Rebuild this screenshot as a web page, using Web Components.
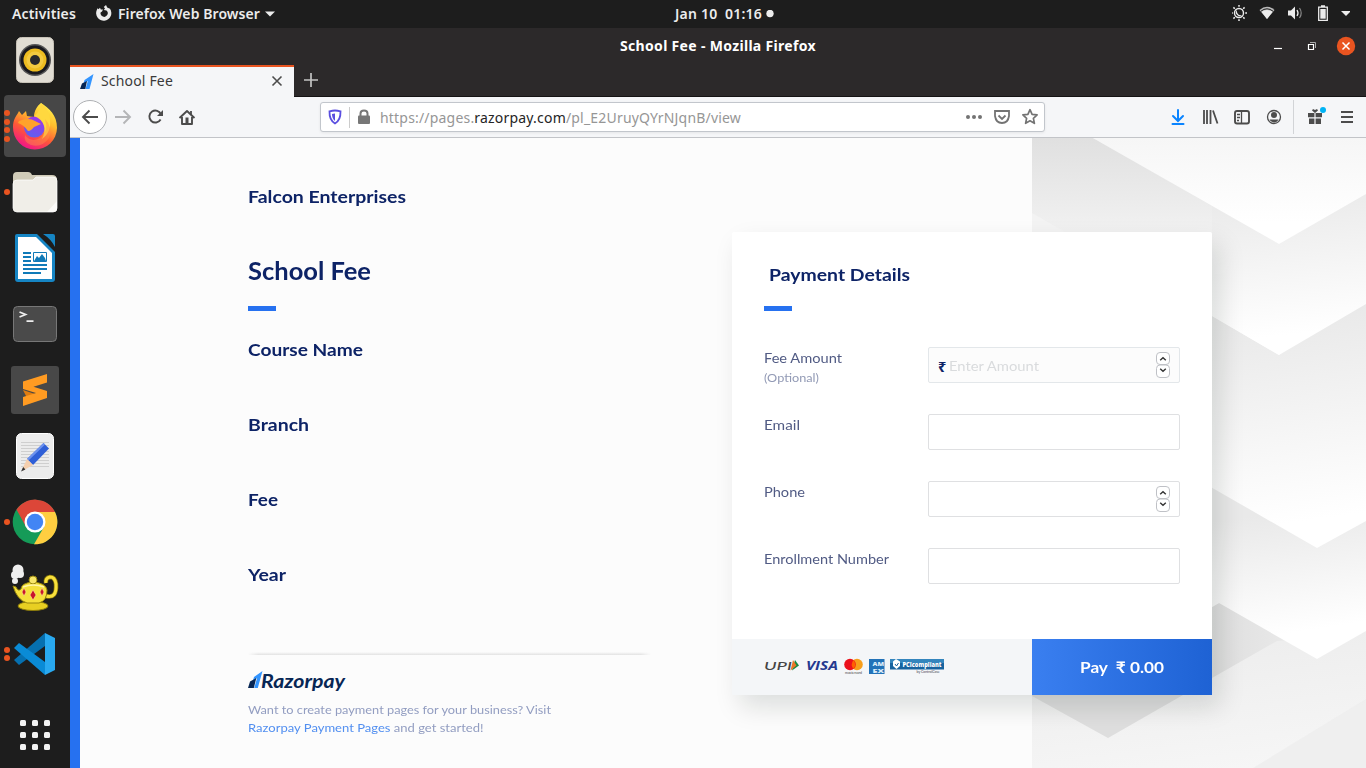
<!DOCTYPE html>
<html lang="en">
<head>
<meta charset="utf-8">
<title>School Fee</title>
<style>
html,body{margin:0;height:100%;overflow:hidden;background:#1d1d1d}
body{font-family:"Noto Sans","Open Sans",sans-serif}
</style>
</head>
<body>
<desk-top></desk-top>
<script>
const define = (name, html) => {
  const t = document.createElement('template');
  t.innerHTML = html;
  customElements.define(name, class extends HTMLElement {
    constructor() {
      super();
      this.attachShadow({mode: 'open'}).append(t.content.cloneNode(true));
    }
  });
};

define('top-panel', `
<style>
:host{display:grid;grid-template-columns:1fr auto 1fr;align-items:center;height:28px;background:#1d1d1d;color:#ececec;font-size:14px;font-weight:600;line-height:28px;white-space:pre}
.l{display:flex;padding-left:12px;align-items:center}.r{display:flex;justify-content:flex-end;align-items:center;padding:0 16px 2px 0}
svg{display:block;flex:none}.c{display:flex;align-items:center;gap:4px;padding-left:83px}
.fx{margin:-2px 6px 0 20px}.dn{margin-left:5px}fit-text{height:28px;margin-top:-1px}
</style>
<div class="l"><fit-text w="64">Activities</fit-text>
<svg class="fx" width="16" height="16" viewBox="0 0 16 16"><path fill="#ececec" d="M.8 5L1.500 3.200l1 1L4 2.800l.8 1.600H7L6 6.400 4.600 7.500A3.600 3.600 0 1 0 10.500 5.500L7.800 5 9 3.500 7.800 2 10 0l1.200 2.500L14 3.800A7.600 7.600 0 1 1 .8 5z"/></svg>
<fit-text w="142">Firefox Web Browser</fit-text>
<svg class="dn" width="10" height="6"><path fill="#ececec" d="M0 .5h10L5 5.500z"/></svg></div>
<div class="c"><fit-text w="87">Jan 10  01:16</fit-text><svg width="8" height="8"><circle cx="4" cy="3.500" r="3.700" fill="#ececec"/></svg></div>
<div class="r">
<svg width="118" height="20" viewBox="0 0 118 20"><g fill="none" stroke="#ececec"><circle cx="7" cy="10" r="4.500" stroke-width="1.400"/><path stroke-width="1.500" d="M7 2v1.800M7 16.200V18M-1 10h1.800M13.200 10H15M1.400 4.400l1.400 1.400M11.200 14.200l1.400 1.400M1.400 15.600l1.400-1.400M11.200 5.800l1.400-1.400"/></g><path fill="#ececec" d="M5 7a3.600 3.600 0 1 0 5.200 5A4 4 0 0 1 5 7z"/>
<path fill="#bbb" d="M27.500 7Q35 .5 42.500 7L35 16z"/><path fill="#ececec" d="M29.500 8.800Q35 5 40.500 8.800L35 16z"/><path fill="none" stroke="#1d1d1d" d="M28.800 8.300q6.200-5 12.400 0"/>
<path fill="#ececec" d="M56 7.500h3l4-4v13l-4-4h-3z"/><path fill="none" stroke="#ececec" stroke-width="1.300" d="M65 7q2 3 0 6"/><path fill="none" stroke="#888" stroke-width="1.200" d="M67.500 5q3.400 5 0 10"/>
<path fill="none" stroke="#ececec" stroke-width="1.300" d="M86.700 4.200h8.600v13.100h-8.600zM89 3h4"/><path fill="#ececec" d="M88.300 6h5.400v9.700h-5.400z"/><path fill="#ececec" d="M109 8h10l-5 5z"/></svg></div>`);

define('dock-item', `
<style>
:host{display:grid;grid-template-columns:8px 1fr;align-items:center;width:62px;height:62px;border-radius:4px;margin:0 auto 4px}
:host([active]){background:#474747}
.d{display:flex;flex-direction:column;gap:2.600px}
.d ::slotted(i){display:block;width:6px;height:6px;border-radius:3px;background:#e95420}
.i{margin-left:-8px;display:grid;place-items:center;height:62px}
</style><div class="d"><slot name="dot"></slot></div><div class="i"><slot></slot></div>`);

define('side-dock', `
<style>
:host{display:flex;flex-direction:column;width:70px;background:#1d1d1d;padding-top:1px;box-sizing:border-box}
svg{display:block}.apps{margin-top:27px}
</style>
<dock-item><svg width="38" height="46" viewBox="0 0 38 46"><rect x=".5" y=".5" width="37" height="45" rx="5" fill="#e1ddd4" stroke="#c8c3b8"/><circle cx="19" cy="23" r="16" fill="#555"/><circle cx="19" cy="23" r="14.500" fill="#19191f"/><circle cx="19" cy="23" r="11.500" fill="#edbc20"/><circle cx="19" cy="23" r="8.500" fill="#f3ca40"/><circle cx="19" cy="23" r="5" fill="#29292c"/></svg></dock-item>
<dock-item active><i slot="dot"></i><i slot="dot"></i><i slot="dot"></i><i slot="dot"></i>
<svg width="46" height="48" viewBox="0 0 46 48"><defs><linearGradient id="f" x1=".8" y1="0" x2=".3" y2="1"><stop offset="0" stop-color="#fff44f"/><stop offset=".35" stop-color="#ffbd2d"/><stop offset=".65" stop-color="#ff5a36"/><stop offset="1" stop-color="#f0118c"/></linearGradient><linearGradient id="g" x1=".7" y1="0" x2=".3" y2="1"><stop offset="0" stop-color="#a033e8"/><stop offset="1" stop-color="#5b62ef"/></linearGradient></defs><path fill="url(#f)" d="M29 1c8 5 16 12 16 25A22 22 0 0 1 1 25C1 18 4 14 6 11l1-2 3 4 4-4 1 5 7 1c0-6 3-11 7-14z"/><circle cx="22.500" cy="25" r="10.500" fill="url(#g)"/><path fill="#ffa22b" d="M7 19q10-4 16 0l6 3-7 3q-3 4-6 4-4-6-10-8z"/><path fill="#ffd83f" d="M22 14c3-1 6-7 7-13 7 6 10 12 9 23-1 6-4 10-8 13 5-9 3-19-8-23z"/><path fill="#ff914a" d="M33 17q4 12-5 19-9 5-15-3-2 7 6 10 11 3 18-7 4-11-4-19z" opacity=".45"/></svg></dock-item>
<dock-item><i slot="dot"></i><svg width="46" height="42" viewBox="0 0 46 42"><path fill="#d0cbb8" d="M1 5q0-4 4-4h11q3 0 4 3h20q5 0 5 5v20H1z"/><path fill="#f0eee8" stroke="#fff" stroke-width=".7" d="M1 13q0-4 4-4h16l3-3h17q4 0 4 4v27q0 4-4 4H5q-4 0-4-4z"/><path fill="#fff" opacity=".7" d="M35 41l10-11v8q0 3-4 3z"/></svg></dock-item>
<dock-item><svg width="42" height="48" viewBox="0 0 42 48"><path fill="#1685c4" d="M3 0h20l18 18v27a3 3 0 0 1-3 3H4a3 3 0 0 1-3-3V2q0-2 2-2zM29 0h10q2 0 2 2v11q-4-8-12-13z"/><path fill="#fff" d="M4 3h18l16 16v26H4z"/><path stroke="#107ab8" stroke-width="2" d="M9 19h8M9 23h8M9 27h8M9 31h24M9 35h24M9 39h18"/><path fill="none" stroke="#107ab8" d="M19.500 18.500h13v9h-13z"/><path fill="#107ab8" d="M20 27l3-5 2 2 3-4 3 4 1 3z"/></svg></dock-item>
<dock-item><svg width="44" height="36" viewBox="0 0 44 36"><rect x=".5" y=".5" width="43" height="35" rx="4" fill="#4a4a4a" stroke="#777"/><path fill="none" stroke="#eee" stroke-width="1.800" d="M6.500 6l6 2.500-6 2.500M13.500 15.200h7"/></svg></dock-item>
<dock-item><svg width="48" height="48" viewBox="0 0 48 48"><rect width="48" height="48" rx="3" fill="#484848"/><path fill="#e07c10" d="M12 24l24 8-20 0z"/><path fill="#ff9b22" d="M12 15.500L36 8v8.500l-13.500 4.200L36 25v7L12 40v-9l13-4-13-4z"/></svg></dock-item>
<dock-item><svg width="38" height="46" viewBox="0 0 38 46"><rect x=".5" y=".5" width="37" height="45" rx="5" fill="#ececec" stroke="#fff"/><path stroke="#cfcfcf" d="M5 9.500h28M5 12.500h28M5 15.500h28M5 18.500h28M5 21.500h28M5 24.500h28M5 27.500h28M5 30.500h28M5 33.500h28"/><path fill="#2f5fd7" d="M27.500 10l5.500 5.500L17 32l-6-6z"/><path fill="#6d92ee" d="M27.500 10l1.600 1.600L12.500 27.500 11 26z"/><path fill="#f5cfae" d="M11 26l6 6-10 5.500-1-1z"/><path fill="#333" d="M7.200 34l2.200 2.400L5 38.500z"/></svg></dock-item>
<dock-item><i slot="dot"></i><svg width="46" height="46" viewBox="-23 -23 46 46"><circle r="22.300" fill="#159b58"/><path fill="#ffce41" d="M0-10h20A22.300 22.300 0 0 1 -1 22.300L9 5z"/><path fill="#dc4638" d="M-18.500-12.500A22.300 22.300 0 0 1 20-10H0L-9 5z"/><circle r="10.500" fill="#fff"/><circle r="8.200" fill="#4285f4"/></svg></dock-item>
<dock-item><svg width="50" height="48" viewBox="0 0 50 48"><g fill="#eee"><circle cx="8" cy="6" r="5.500"/><circle cx="5" cy="11" r="4"/><circle cx="10" cy="10" r="4"/><circle cx="5" cy="17" r="3"/></g><path fill="none" stroke="#8b7a0a" stroke-width="4.500" d="M36 32q11 3 10-12-1-7-6-7-5 1-4 6"/><path fill="none" stroke="#f8e03c" stroke-width="3" d="M36 32q11 3 10-12-1-7-6-7-5 1-4 6"/><ellipse cx="23" cy="42" rx="15" ry="4.500" fill="#e8cf22" stroke="#8b7a0a"/><path fill="#f5e03a" stroke="#9a870e" d="M3 22l3 1q2 5 5 2 0-6 12-7 13 1 14 8 0 11-8 13H17Q7 36 3 22z"/><circle cx="23" cy="16" r="4" fill="#f8e76a" stroke="#9a870e"/><path fill="none" stroke="#fff6a8" stroke-width="1.500" d="M13 23q10-4 21 0"/><path fill="#c8152b" stroke="#fff2a0" stroke-width=".5" d="M23 26l3 5-3 5-3-5zM14 24l2 4-2 4-2-4zM32 24l2 4-2 4-2-4z"/></svg></dock-item>
<dock-item><i slot="dot"></i><i slot="dot"></i><svg width="44" height="44" viewBox="0 0 44 44"><path fill="#0670b0" d="M1 28l5 5 26-19V1L1 28z"/><path fill="#0a8bd6" d="M6 11l26 19v13L1 16z"/><path fill="#29a9f0" d="M32 1l10 5v32l-10 5z"/></svg></dock-item>
<svg class="apps" width="70" height="50" viewBox="0 0 70 50" fill="#f2f2f2"><g id="r"><rect x="20" y="4" width="6" height="6" rx="1.500"/><rect x="32" y="4" width="6" height="6" rx="1.500"/><rect x="44" y="4" width="6" height="6" rx="1.500"/></g><use href="#r" y="12"/><use href="#r" y="24"/></svg>`);

define('title-bar', `
<style>
:host{display:grid;grid-template-columns:1fr auto 1fr;height:37px;align-items:center;background:#2c292a;color:#fff;font-size:14px;font-weight:700;line-height:35px}
span{grid-column:2;height:37px}svg{justify-self:end;margin:-1px 10px 0 0}
</style><span><fit-text w="196">School Fee - Mozilla Firefox</fit-text></span>
<svg width="84" height="20" viewBox="0 0 84 20"><path stroke="#fff" stroke-width="1.200" d="M2 12.500h8"/><path fill="none" stroke="#fff" stroke-width="1.200" d="M36.500 8.500h5v5h-5z"/><path fill="none" stroke="#aaa" d="M38 6.500h5.500V12"/><circle cx="74" cy="10" r="9.200" fill="#e95420"/><path stroke="#fff" stroke-width="1.500" d="M70.500 6.500l7 7M77.500 6.500l-7 7"/></svg>`);

define('tab-strip', `
<style>
:host{display:flex;height:32px;background:#2c292a;box-shadow:inset 0 -1px #151314}
.t{box-sizing:border-box;width:224px;height:32px;background:#f5f6f8;border-top:2px solid #e95420;display:flex;align-items:center;padding:0 10px 0 9px;color:#3a3a3a;font-size:14px;line-height:28px}
fit-text{margin:-2px 0 0 6px;flex:none}.x{margin-left:auto}.p{margin:7px 0 0 9px}
</style><div class="t"><svg width="16" height="18" viewBox="0 0 16 18"><path fill="#3395ff" d="M14.500 1L10.500 16H6.500L8.800 8 4.500 10.500 5.500 7z"/><path fill="#072654" d="M3 10.500l5-2.500L6.300 16H1z"/></svg><fit-text w="72">School Fee</fit-text>
<svg class="x" width="14" height="14"><path stroke="#4c4c4c" stroke-width="1.600" d="M2.500 1.500l9 9M11.500 1.500l-9 9"/></svg></div>
<svg class="p" width="16" height="16"><path stroke="#c4c3c3" stroke-width="1.700" d="M1 8h14M8 1v14"/></svg>`);

define('address-bar', `
<style>
:host{box-sizing:border-box;display:flex;align-items:center;width:725px;height:30px;border:1px solid #c2c6cc;border-radius:3px;background:#fff;box-shadow:0 1px 3px #0001;color:#969696;font-size:14px;line-height:28px}
b{font-weight:400;color:#252525}.a{margin-right:8px}.z{margin-left:auto;margin-right:5px}fit-text{margin-top:1px}
</style>
<svg class="a" width="51" height="28" viewBox="0 0 51 28"><path fill="none" stroke="#5a4ee0" stroke-width="1.800" d="M8.500 8.300q3-.8 5.500-.8t5.500.8q.3 9-5.500 12.200Q8.200 17.300 8.500 8.300z"/><path fill="#5a4ee0" d="M14 10.500q-2 0-3 .5 0 4.500 3 7z"/><path stroke="#ccc" d="M28.500 4v21"/><rect x="37" y="12.500" width="12" height="8.500" rx="1" fill="#777"/><path fill="none" stroke="#777" stroke-width="2" d="M39.500 13v-2.500q0-3 3.500-3t3.500 3V13"/></svg>
<fit-text w="361">https://pages.<b>razorpay.com</b>/pl_E2UruyQYrNJqnB/view</fit-text>
<svg class="z" width="74" height="28" viewBox="0 0 74 28"><g fill="#737373"><circle cx="3" cy="14" r="2"/><circle cx="9" cy="14" r="2"/><circle cx="15" cy="14" r="2"/></g><g fill="none" stroke="#737373" stroke-width="1.800"><path d="M30 8h14v5q-1 7-7 7t-7-7z"/><path d="M33.500 12.500l3.500 3.500 3.500-3.500"/><path stroke-width="1.700" stroke-linejoin="round" d="M65 6.700l2.100 4.600 5 .6-3.700 3.400 1 5-4.400-2.500-4.400 2.500 1-5-3.700-3.400 5-.6z"/></g></svg>`);

define('tool-bar', `
<style>
:host{box-sizing:border-box;display:flex;height:41px;background:#f5f6f8;border-bottom:1px solid #c2c4c8}
svg{display:block}address-bar{margin:5px 0 0 110px}.r{margin-left:auto}
</style>
<svg width="140" height="40" viewBox="0 0 140 40"><circle cx="20" cy="20" r="16.500" fill="#fff" stroke="#aeb0b3"/><path fill="none" stroke="#4c4c4c" stroke-width="1.900" d="M28 20H13M19.500 13.500L13 20l6.500 6.500"/><path fill="none" stroke="#b4b5b7" stroke-width="1.900" d="M45 20h15M53.500 13.500L60 20l-6.500 6.500"/><g fill="none" stroke="#4c4c4c" stroke-width="1.900"><path d="M91 17.500a6 6 0 1 0-.4 5"/><path fill="#4c4c4c" stroke="none" d="M93 13v6h-6z"/><path stroke-linejoin="round" d="M109.500 21l7.500-7 7.500 7M112 20v7h10v-7"/></g><path fill="#4c4c4c" d="M115.500 20.500h3V28h-3z"/><path stroke="#4c4c4c" stroke-width="1.800" d="M121 14v4"/></svg>
<address-bar></address-bar>
<svg class="r" width="206" height="40" viewBox="0 0 206 40"><path fill="none" stroke="#0a84ff" stroke-width="2" stroke-linecap="round" d="M18 13v10M13 19l5 5 5-5M12.500 27h11"/><path stroke="#4c4c4c" stroke-width="1.800" d="M44 13v14M47 13v14M50.500 13v14M53 13.500l4.500 13"/><rect x="75" y="14" width="14" height="12.500" rx="2" fill="none" stroke="#4c4c4c" stroke-width="1.900"/><path stroke="#4c4c4c" stroke-width="1.300" d="M81.500 14v12.500M77 17.500h3M77 20.500h3M77 23.500h2"/><circle cx="114" cy="20" r="6.500" fill="none" stroke="#4c4c4c" stroke-width="1.300"/><circle cx="114" cy="18" r="3" fill="#4c4c4c"/><path fill="#4c4c4c" d="M109.500 22.500h9q-1.500 3-4.500 3t-4.500-3z"/><path stroke="#d2d4d7" d="M133.500 3v34"/><path fill="#4c4c4c" d="M148 16h6.400v4.300H148zM155.600 16h6.400v4.300h-6.400zM149 21.500h5.400V27H149zM155.600 21.500h5.400V27h-5.400zM153 12l2 1 2-1 1 1.500-3 2.500-3-2.500z"/><circle cx="163" cy="13" r="3" fill="#00b3f4"/><path stroke="#4c4c4c" stroke-width="1.900" d="M181 15h12M181 20h12M181 25h12"/></svg>`);

define('chevron-art', `
<style>:host{display:block;width:334px;height:630px}svg{display:block}</style>
<svg width="334" height="630" viewBox="0 0 334 630"><defs>
<linearGradient id="a" x2="0" y2="1"><stop offset="0" stop-color="#e0e0e0"/><stop offset="1" stop-color="#f5f5f5"/></linearGradient>
<linearGradient id="b" x2="0" y2="1"><stop offset="0" stop-color="#f6f6f6"/><stop offset=".8" stop-color="#fff"/></linearGradient>
<linearGradient id="c" gradientUnits="userSpaceOnUse" x1="210" y1="60" x2="225" y2="200"><stop offset="0" stop-color="#eaeaea"/><stop offset="1" stop-color="#fff"/></linearGradient>
<linearGradient id="d" gradientUnits="userSpaceOnUse" x1="230" y1="170" x2="260" y2="385"><stop offset="0" stop-color="#e8e8e8"/><stop offset="1" stop-color="#fff"/></linearGradient>
<linearGradient id="e" gradientUnits="userSpaceOnUse" x1="240" y1="375" x2="258" y2="495"><stop offset="0" stop-color="#e9e9e9"/><stop offset="1" stop-color="#fff"/></linearGradient>
<linearGradient id="k" gradientUnits="userSpaceOnUse" x1="180" y1="0" x2="270" y2="0"><stop offset="0" stop-color="#dedede"/><stop offset="1" stop-color="#ebebeb"/></linearGradient>
<linearGradient id="h" gradientUnits="userSpaceOnUse" x1="200" y1="480" x2="220" y2="630"><stop offset="0" stop-color="#ececec"/><stop offset="1" stop-color="#f6f6f6"/></linearGradient></defs>
<path fill="url(#h)" d="M0 0h334v630H0z"/>
<path fill="#ededed" d="M334 561v69H221z" opacity=".7"/>
<path fill="url(#k)" d="M180 469l7-4 98 35-40 3-65 37z"/>
<path fill="#dedede" d="M0 540h180l-29 17-75 43-76-42z"/>
<path fill="url(#e)" d="M180 469l7-4 98 56 49-28V300H180z"/>
<path fill="url(#d)" d="M170 150h164v233l-49 27-115-66z"/>
<path fill="url(#c)" d="M0 0h334v166l-87 51L61 108 0 100z"/>
<path fill="url(#a)" d="M0 0h61l164 94v20H33L0 75z"/><path fill="#f3f3f3" d="M0 75l33 19v12H0z"/>
<path fill="url(#c)" d="M180 50h67v50l40-20 10 80-50 57-67-39z"/>
<path fill="url(#b)" d="M61 0h273v56l-87 50z"/></svg>`);

define('accent-bar', `<style>:host{display:block;width:28px;height:5px;background:#2671f0}</style>`);

define('fee-info', `
<style>
:host{display:block;padding:47px 0 0 168px;color:#0d2366;font-family:Lato,"Noto Sans",sans-serif;font-weight:700;font-size:17.500px}
div{height:24px;line-height:24px}.h{height:32px;line-height:31px;font-size:24px;margin:46px 0 19px}
.s{margin-bottom:51px}accent-bar{margin-bottom:27px}
.rule{width:403px;height:3px;margin:65px 0 16px;background:linear-gradient(to bottom,#fcfcfc,#e2e2e2);mask:linear-gradient(90deg,transparent,#000 10px 393px,transparent)}
svg{display:block}p{margin:6px 0 0;font-size:12px;line-height:18px;font-weight:400;color:#929dc1}a{color:#528ff0}
</style>
<div><fit-text stretch w="158">Falcon Enterprises</fit-text></div>
<div class="h"><fit-text stretch w="123">School Fee</fit-text></div><accent-bar></accent-bar>
<div class="s"><fit-text stretch w="115">Course Name</fit-text></div><div class="s"><fit-text stretch w="61">Branch</fit-text></div><div class="s"><fit-text stretch w="30">Fee</fit-text></div><div><fit-text stretch w="38">Year</fit-text></div>
<div class="rule"></div>
<svg width="100" height="24" viewBox="0 0 100 24"><path fill="#3395ff" d="M14.500 0L9.800 17H6.200l2.900-10L5 9.500 6 6z"/><path fill="#072654" d="M2 10.500L8.300 7 5.800 17H0z"/><text x="13" y="16.500" font-family="Lato" font-size="18" font-weight="700" font-style="italic" fill="#072654" textLength="84" lengthAdjust="spacingAndGlyphs">Razorpay</text></svg>
<p><fit-text stretch w="303">Want to create payment pages for your business? Visit</fit-text><br><fit-text stretch w="235.500"><a>Razorpay Payment Pages</a> and get started!</fit-text></p>`);

define('form-row', `
<style>
:host{display:grid;grid-template-columns:164px 252px;height:67px;align-items:start}
.l{font-size:14px;line-height:22px;color:#515b84}.l ::slotted(small){display:block;font-size:12px;line-height:18px;color:#929ab5}
.i{box-sizing:border-box;display:flex;align-items:center;height:36px;border:1px solid #dfe0e2;border-radius:2px;background:#fff;padding:0 9px;font-size:14px}
:host([filled]) .i{background:#fcfcfc;border-color:#e3e7ea}
.n{display:none;margin-left:auto}:host([num]) .n{display:block}
</style><div class="l"><slot></slot></div>
<div class="i"><slot name="v"></slot><svg class="n" width="14" height="26" viewBox="0 0 14 26"><rect x=".5" y=".5" width="13" height="12" rx="3.500" fill="#fff" stroke="#bfc1c6"/><rect x=".5" y="13" width="13" height="12.500" rx="3.500" fill="#fff" stroke="#bfc1c6"/><path fill="none" stroke="#333" stroke-width="1.400" d="M4.200 8.300L7 5.800l2.800 2.500M4.200 16.700L7 19.200l2.800-2.500"/></svg></div>`);

define('pay-card', `
<style>
:host{display:flex;flex-direction:column;width:480px;height:463px;background:#fff;border-radius:2px;box-shadow:8px 12px 26px rgba(0,20,15,.13);font-family:Lato,"Noto Sans",sans-serif}
.b{height:407px;box-sizing:border-box;padding:31px 32px 0}
h2{margin:0 0 19px 5px;font-size:17.500px;line-height:24px;height:24px;font-weight:700;color:#0d2366}
accent-bar{margin-bottom:36px}
.f{display:flex;height:56px;background:#f4f6f8}.logos{width:268px;padding-left:32px}svg{display:block}
.p{width:180px;background:linear-gradient(90deg,#3a7ff0,#1e62d4);color:#fff;font-size:16px;font-weight:700;line-height:56px;text-align:center;white-space:pre}
.r{color:#0d2366;font-weight:700;font-family:"Noto Sans";font-size:14.500px;width:11px;margin-top:1px}.e{color:#d9dbdd}
</style>
<div class="b"><h2><fit-text stretch w="141">Payment Details</fit-text></h2><accent-bar></accent-bar>
<form-row filled num><fit-text stretch w="78">Fee Amount</fit-text><small><fit-text stretch w="55">(Optional)</fit-text></small><span slot="v" class="r">₹</span><fit-text stretch slot="v" class="e" w="90">Enter Amount</fit-text></form-row>
<form-row><fit-text stretch w="36">Email</fit-text></form-row>
<form-row num><fit-text stretch w="41">Phone</fit-text></form-row>
<form-row><fit-text stretch w="125">Enrollment Number</fit-text></form-row></div>
<div class="f"><div class="logos"><svg width="182" height="56" viewBox="0 0 182 56">
<text x="0" y="30.500" font-family="Lato" font-size="12" font-style="italic" font-weight="500" fill="#444" textLength="28" lengthAdjust="spacingAndGlyphs">UPI</text><path fill="#148a43" d="M31 21l4 5.500-7 5z"/><path fill="#e97626" d="M29 21l3.500 5.500-6 5z"/>
<text x="42" y="31" font-family="Open Sans" font-size="13" font-style="italic" font-weight="700" fill="#24398f" textLength="32" lengthAdjust="spacingAndGlyphs">VISA</text>
<circle cx="93" cy="25.500" r="5.800" fill="#f79e1b"/><circle cx="86" cy="25.500" r="5.800" fill="#eb101b"/><path fill="#ff5f00" d="M89.500 21q3.500 4.500 0 9-3.500-4.500 0-9z"/><text x="81" y="34.500" font-family="Lato" font-size="3.500" fill="#444" textLength="17">mastercard</text>
<rect x="105" y="20" width="15.500" height="15" fill="#2272b8"/><g font-family="Open Sans" font-size="5.500" font-weight="800" fill="#dcecf8"><text x="108.500" y="26.500" textLength="11.500" lengthAdjust="spacingAndGlyphs">AM</text><text x="108.500" y="34" textLength="11.500" lengthAdjust="spacingAndGlyphs">EX</text></g>
<rect x="126" y="20" width="54" height="10.500" fill="#17639f"/><rect x="126" y="20" width="54" height="4" fill="#3385bd"/><path fill="#fff" d="M129 22.500l3-2.500 4 2.500v4.500l-3.500 3-3.500-3z"/><path fill="none" stroke="#17639f" d="M131 25l1.500 2 2-3"/><text x="138.500" y="28" font-family="Open Sans" font-size="6" font-weight="800" fill="#fff" textLength="39" lengthAdjust="spacingAndGlyphs">PCIcompliant</text><text x="152.500" y="34" font-family="Lato" font-size="3.500" fill="#445" textLength="23">by ControlCase</text></svg></div>
<div class="p"><fit-text stretch w="84">Pay  ₹ 0.00</fit-text></div></div>`);

define('web-page', `
<style>
:host{display:grid;box-sizing:border-box;grid-template-columns:652px 300px 334px;height:630px;border-left:10px solid #2671f0;background:#fcfcfc;overflow:hidden}
fee-info,chevron-art,pay-card{grid-row:1}fee-info{grid-column:1}chevron-art{grid-column:3}pay-card{grid-column:2/4;margin-top:94px}
</style><fee-info></fee-info><chevron-art></chevron-art><pay-card></pay-card>`);

define('desk-top', `
<style>
:host{display:grid;grid-template:28px 740px/70px 1296px;width:1366px;height:768px;overflow:hidden}
top-panel{grid-column:1/3}main{display:flex;flex-direction:column}
</style><top-panel></top-panel><side-dock></side-dock><main><title-bar></title-bar><tab-strip></tab-strip><tool-bar></tool-bar><web-page></web-page></main>`);

/* Fits its text to the width in the w attribute: by letter spacing,
   or with the stretch attribute by widening the letters. */
customElements.define('fit-text', class extends HTMLElement {
  constructor() {
    super();
    this.attachShadow({mode: 'open'}).innerHTML = '<style>:host{display:inline-block;white-space:pre;text-align:left}span{display:inline-block;transform-origin:0 50%}</style><span><slot></slot></span>';
  }
  connectedCallback() {
    const w = +this.getAttribute('w');
    const span = this.shadowRoot.querySelector('span');
    const natural = span.getBoundingClientRect().width;
    if (this.hasAttribute('stretch')) {
      span.style.transform = 'scaleX(' + (w / natural).toFixed(4) + ')';
      this.style.width = w + 'px';
    } else {
      this.style.letterSpacing = ((w - natural) / this.textContent.length).toFixed(3) + 'px';
    }
  }
});
</script>
</body>
</html>
